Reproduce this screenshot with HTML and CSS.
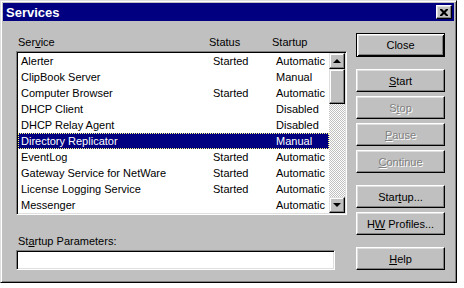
FILE: index.html
```html
<!DOCTYPE html>
<html>
<head>
    <title>Services</title>
    <meta name="viewport" content="width=device-width, initial-scale=1">
    <link rel="stylesheet" href="styles.css">
</head>
<body>
    <div class="window">
        <div class="titlebar">
            <span class="title">Services</span>
            <span class="title-close">
                <svg width="8" height="7" viewBox="0 0 8 7"><path d="M0 0h2l2 2 2-2h2v1l-2.5 2.5L8 6v1H6L4 5 2 7H0V6l2.5-2.5L0 1z" fill="#000"/></svg>
            </span>
        </div>
        <div class="content">
            <div class="main">
                <div class="headers">
                    <span>Ser<u>v</u>ice</span>
                    <span>Status</span>
                    <span>Startup</span>
                </div>
                <div class="listbox">
                    <div class="rows">
                        <div class="row"><span>Alerter</span><span>Started</span><span>Automatic</span></div>
                        <div class="row"><span>ClipBook Server</span><span></span><span>Manual</span></div>
                        <div class="row"><span>Computer Browser</span><span>Started</span><span>Automatic</span></div>
                        <div class="row"><span>DHCP Client</span><span></span><span>Disabled</span></div>
                        <div class="row"><span>DHCP Relay Agent</span><span></span><span>Disabled</span></div>
                        <div class="row selected"><span>Directory Replicator</span><span></span><span>Manual</span></div>
                        <div class="row"><span>EventLog</span><span>Started</span><span>Automatic</span></div>
                        <div class="row"><span>Gateway Service for NetWare</span><span>Started</span><span>Automatic</span></div>
                        <div class="row"><span>License Logging Service</span><span>Started</span><span>Automatic</span></div>
                        <div class="row"><span>Messenger</span><span></span><span>Automatic</span></div>
                    </div>
                    <div class="scrollbar">
                        <div class="scroll-btn"><span class="arrow-up"></span></div>
                        <div class="thumb"></div>
                        <div class="track"></div>
                        <div class="scroll-btn"><span class="arrow-down"></span></div>
                    </div>
                </div>
                <div class="param-label">St<u>a</u>rtup Parameters:</div>
                <div class="edit"></div>
            </div>
            <div class="buttons">
                <div class="btn default"><span>Close</span></div>
                <div class="btn gap-big"><span><u>S</u>tart</span></div>
                <div class="btn disabled"><span>S<u>t</u>op</span></div>
                <div class="btn disabled"><span><u>P</u>ause</span></div>
                <div class="btn disabled"><span><u>C</u>ontinue</span></div>
                <div class="btn gap-big"><span>Star<u>t</u>up...</span></div>
                <div class="btn"><span>H<u>W</u> Profiles...</span></div>
                <div class="btn gap-big"><span><u>H</u>elp</span></div>
            </div>
        </div>
    </div>
</body>
</html>
```

FILE: styles.css
```css
body {
    margin: 0;
    background-color: #fff;
    font-family: "Liberation Sans", Arial, sans-serif;
    font-size: 11px;
    color: #000;
}

.window {
    box-sizing: border-box;
    width: 457px;
    height: 283px;
    background-color: #c0c0c0;
    border: 1px solid;
    border-color: #dfdfdf #000 #000 #dfdfdf;
    box-shadow: inset 1px 1px #fff, inset -1px -1px #808080;
    padding: 2px;
}

.titlebar {
    height: 18px;
    background-color: #000080;
    color: #fff;
    display: flex;
    align-items: center;
    justify-content: space-between;
    padding: 0 2px 0 3px;
}

.title {
    font-weight: bold;
    font-size: 13px;
}

.title-close {
    box-sizing: border-box;
    width: 16px;
    height: 14px;
    background-color: #c0c0c0;
    border: 1px solid;
    border-color: #fff #000 #000 #fff;
    box-shadow: inset -1px -1px #808080, inset 1px 1px #dfdfdf;
    display: flex;
    align-items: center;
    justify-content: center;
}

.content {
    display: flex;
    padding: 12px 0 0 13px;
}

.main {
    width: 331px;
    padding-top: 2px;
}

.headers {
    display: grid;
    grid-template-columns: 191px 63px 1fr;
    height: 16px;
    line-height: 14px;
    padding-left: 2px;
}

.listbox {
    box-sizing: border-box;
    height: 164px;
    display: flex;
    border: 1px solid;
    border-color: #808080 #fff #fff #808080;
    box-shadow: inset 1px 1px #000, inset -1px -1px #dfdfdf;
    padding: 1px;
}

.rows {
    flex: 1;
    background-color: #fff;
}

.row {
    display: grid;
    grid-template-columns: 192px 63px 1fr;
    height: 16px;
    line-height: 16px;
    padding-left: 3px;
    white-space: nowrap;
}

.row.selected {
    background-color: #000080;
    color: #fff;
    outline: 1px dotted #ffff80;
    outline-offset: -1px;
}

.scrollbar {
    width: 16px;
    display: flex;
    flex-direction: column;
}

.scroll-btn, .thumb {
    box-sizing: border-box;
    background-color: #c0c0c0;
    border: 1px solid;
    border-color: #dfdfdf #000 #000 #dfdfdf;
    box-shadow: inset -1px -1px #808080, inset 1px 1px #fff;
}

.scroll-btn {
    height: 16px;
    display: flex;
    align-items: center;
    justify-content: center;
}

.thumb {
    height: 35px;
}

.track {
    flex: 1;
    background-image: repeating-conic-gradient(#c0c0c0 0 25%, #fff 0 50%);
    background-size: 2px 2px;
}

.arrow-up, .arrow-down {
    width: 0;
    height: 0;
    border-left: 4px solid transparent;
    border-right: 4px solid transparent;
}

.arrow-up {
    border-bottom: 4px solid #000;
}

.arrow-down {
    border-top: 4px solid #000;
}

.param-label {
    margin-top: 19px;
    line-height: 14px;
    padding-left: 2px;
}

.edit {
    box-sizing: border-box;
    width: 319px;
    height: 20px;
    margin-top: 2px;
    background-color: #fff;
    border: 1px solid;
    border-color: #808080 #fff #fff #808080;
    box-shadow: inset 1px 1px #000, inset -1px -1px #dfdfdf;
}

.buttons {
    margin-left: 9px;
    display: flex;
    flex-direction: column;
    gap: 4px;
}

.btn {
    box-sizing: border-box;
    width: 89px;
    height: 23px;
    display: flex;
    align-items: center;
    justify-content: center;
    border: 1px solid;
    border-color: #fff #000 #000 #fff;
    box-shadow: inset -1px -1px #808080, inset 1px 1px #dfdfdf;
}

.btn.default {
    height: 24px;
    border-color: #000;
    box-shadow: inset 1px 1px #fff, inset -1px -1px #000, inset 2px 2px #dfdfdf, inset -2px -2px #808080;
}

.btn.gap-big {
    margin-top: 8px;
}

.btn.disabled {
    color: #808080;
    text-shadow: 1px 1px #fff;
}
```
